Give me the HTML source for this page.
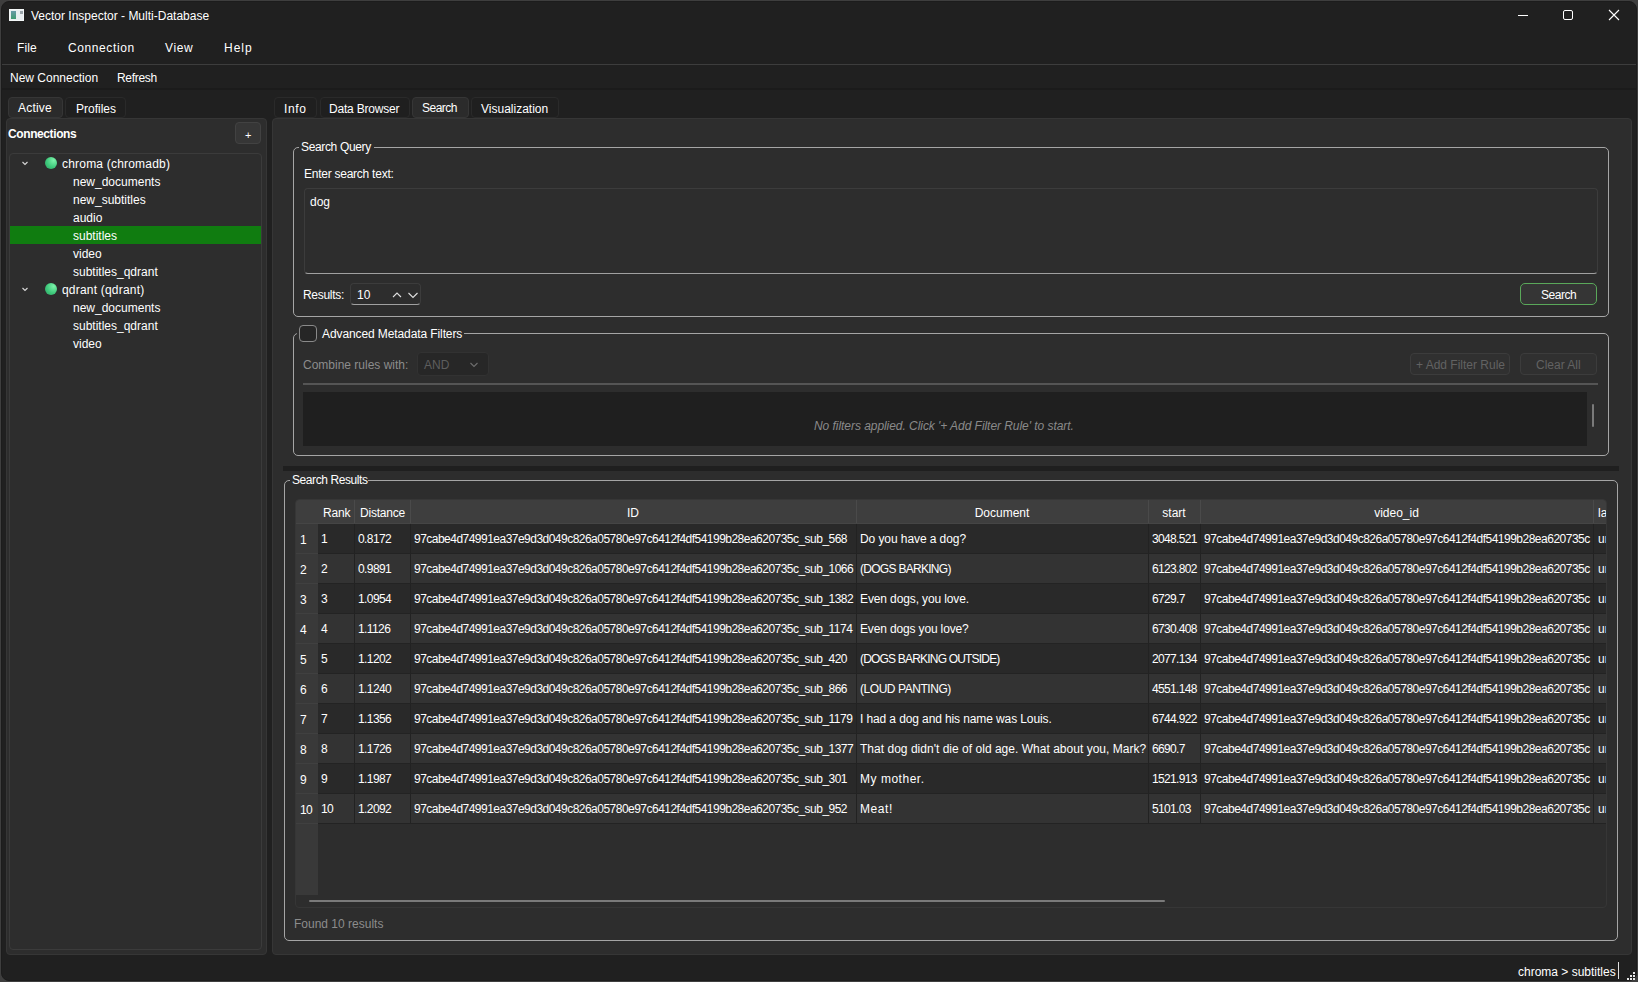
<!DOCTYPE html>
<html><head><meta charset="utf-8">
<style>
*{box-sizing:border-box;margin:0;padding:0}
html,body{width:1638px;height:982px;overflow:hidden;background:#3e3e3e;font-family:"Liberation Sans",sans-serif;font-size:12px;color:#fff}
.a{position:absolute}
.t{position:absolute;white-space:nowrap;line-height:14px;font-size:12px;color:#fff}
.g{color:#8c8c8c}
.hx{letter-spacing:-0.5px}
</style></head><body>
<div class="a" style="left:1px;top:1px;width:1636px;height:980px;background:#202020;border-radius:8px;border:1px solid #1c1c1c"></div>
<div class="a" style="left:9px;top:9px;width:15px;height:12px;background:#e8eef0;border:1px solid #f4f8f8"></div>
<div class="a" style="left:11px;top:11px;width:5px;height:8px;background:linear-gradient(180deg,#6a9aa8,#3e9a70)"></div>
<div class="a" style="left:20px;top:11px;width:3px;height:3px;background:#9aa4aa"></div>
<div class="t" style="left:31px;top:9px;">Vector Inspector - Multi-Database</div>
<div class="a" style="left:1518px;top:15px;width:10px;height:1px;background:#fff"></div>
<div class="a" style="left:1563px;top:10px;width:10px;height:10px;border:1px solid #fff;border-radius:2px"></div>
<svg class="a" style="left:1608px;top:9px" width="12" height="12" viewBox="0 0 12 12"><path d="M1 1L11 11M11 1L1 11" stroke="#fff" stroke-width="1.1"/></svg>
<div class="t" style="left:17px;top:41px;letter-spacing:0.1px">File</div>
<div class="t" style="left:68px;top:41px;letter-spacing:0.6px">Connection</div>
<div class="t" style="left:165px;top:41px;letter-spacing:0.6px">View</div>
<div class="t" style="left:224px;top:41px;letter-spacing:1.0px">Help</div>
<div class="a" style="left:2px;top:64px;width:1634px;height:1px;background:#3d3d3d"></div>
<div class="t" style="left:10px;top:71px;">New Connection</div>
<div class="t" style="left:117px;top:71px;letter-spacing:-0.3px">Refresh</div>
<div class="a" style="left:2px;top:88px;width:1634px;height:2px;background:#1b1b1b"></div>
<div class="a" style="left:8px;top:97px;width:55px;height:21px;background:#2b2b2b;border:1px solid #363636;border-radius:4px"></div>
<div class="a" style="left:65px;top:97px;width:61px;height:21px;background:#1f1f1f;border:1px solid #2a2a2a;border-radius:4px"></div>
<div class="t" style="left:18px;top:101px;letter-spacing:0.2px">Active</div>
<div class="t" style="left:76px;top:102px;">Profiles</div>
<div class="a" style="left:6px;top:118px;width:261px;height:837px;background:#2d2d2d;border:1px solid #363636;border-radius:4px"></div>
<div class="t" style="left:8px;top:127px;font-weight:bold;letter-spacing:-0.4px">Connections</div>
<div class="a" style="left:235px;top:122px;width:26px;height:22px;background:#363636;border:1px solid #424242;border-radius:4px"></div>
<div class="t" style="left:245px;top:128px;font-size:11px">+</div>
<div class="a" style="left:9px;top:153px;width:253px;height:797px;background:#2d2d2d;border:1px solid #3b3b3b;border-radius:4px"></div>
<div class="a" style="left:10px;top:226px;width:251px;height:18px;background:#107c10"></div>
<svg class="a" style="left:21px;top:161px" width="8" height="5" viewBox="0 0 8 5"><path d="M1.5 1L4 3.5L6.5 1" stroke="#d8d8d8" stroke-width="1.1" fill="none"/></svg>
<div class="a" style="left:45px;top:157px;width:12px;height:12px;border-radius:50%;background:radial-gradient(circle at 72% 28%,#7cf2aa,#3fca7c 55%,#2c9f62)"></div>
<div class="t" style="left:62px;top:157px;letter-spacing:0.2px">chroma (chromadb)</div>
<div class="t" style="left:73px;top:175px;">new_documents</div>
<div class="t" style="left:73px;top:193px;">new_subtitles</div>
<div class="t" style="left:73px;top:211px;">audio</div>
<div class="t" style="left:73px;top:229px;">subtitles</div>
<div class="t" style="left:73px;top:247px;">video</div>
<div class="t" style="left:73px;top:265px;">subtitles_qdrant</div>
<svg class="a" style="left:21px;top:287px" width="8" height="5" viewBox="0 0 8 5"><path d="M1.5 1L4 3.5L6.5 1" stroke="#d8d8d8" stroke-width="1.1" fill="none"/></svg>
<div class="a" style="left:45px;top:283px;width:12px;height:12px;border-radius:50%;background:radial-gradient(circle at 72% 28%,#7cf2aa,#3fca7c 55%,#2c9f62)"></div>
<div class="t" style="left:62px;top:283px;letter-spacing:0.2px">qdrant (qdrant)</div>
<div class="t" style="left:73px;top:301px;">new_documents</div>
<div class="t" style="left:73px;top:319px;">subtitles_qdrant</div>
<div class="t" style="left:73px;top:337px;">video</div>
<div class="a" style="left:274px;top:97px;width:43px;height:21px;background:#1f1f1f;border:1px solid #2a2a2a;border-radius:4px"></div>
<div class="t" style="left:284px;top:102px;letter-spacing:0.6px">Info</div>
<div class="a" style="left:320px;top:97px;width:90px;height:21px;background:#1f1f1f;border:1px solid #2a2a2a;border-radius:4px"></div>
<div class="t" style="left:329px;top:102px;letter-spacing:-0.2px">Data Browser</div>
<div class="a" style="left:412px;top:97px;width:57px;height:21px;background:#2b2b2b;border:1px solid #363636;border-radius:4px"></div>
<div class="t" style="left:422px;top:101px;letter-spacing:-0.5px">Search</div>
<div class="a" style="left:471px;top:97px;width:88px;height:21px;background:#1f1f1f;border:1px solid #2a2a2a;border-radius:4px"></div>
<div class="t" style="left:481px;top:102px;letter-spacing:0px">Visualization</div>
<div class="a" style="left:272px;top:118px;width:1360px;height:837px;background:#2d2d2d;border:1px solid #363636;border-radius:4px"></div>
<div class="a" style="left:293px;top:147px;width:1316px;height:170px;border:1px solid #a5a5a5;border-radius:5px"></div>
<div class="a" style="left:299px;top:144px;width:75px;height:6px;background:#2d2d2d"></div>
<div class="t" style="left:301px;top:140px;letter-spacing:-0.35px">Search Query</div>
<div class="t" style="left:304px;top:167px;letter-spacing:-0.25px">Enter search text:</div>
<div class="a" style="left:304px;top:188px;width:1294px;height:86px;background:#2d2d2d;border:1px solid #3c3c3c;border-bottom:1px solid #a0a0a0;border-radius:4px"></div>
<div class="t" style="left:310px;top:195px;">dog</div>
<div class="t" style="left:303px;top:288px;letter-spacing:-0.3px">Results:</div>
<div class="a" style="left:350px;top:283px;width:71px;height:22px;background:#2d2d2d;border:1px solid #3c3c3c;border-bottom:1px solid #a0a0a0;border-radius:4px"></div>
<div class="t" style="left:357px;top:288px;">10</div>
<svg class="a" style="left:392px;top:291px" width="28" height="8" viewBox="0 0 28 8"><path d="M1 6L5 2L9 6M16.5 2L21 6.5L25.5 2" stroke="#e0e0e0" stroke-width="1.1" fill="none"/></svg>
<div class="a" style="left:1520px;top:283px;width:77px;height:22px;background:#353535;border:1px solid #5aa85a;border-radius:5px"></div>
<div class="t" style="left:1541px;top:288px;letter-spacing:-0.48px">Search</div>
<div class="a" style="left:293px;top:333px;width:1316px;height:123px;border:1px solid #a5a5a5;border-radius:5px"></div>
<div class="a" style="left:297px;top:325px;width:167px;height:16px;background:#2d2d2d"></div>
<div class="a" style="left:299px;top:325px;width:18px;height:17px;background:#262626;border:1px solid #8a8a8a;border-radius:4px"></div>
<div class="t" style="left:322px;top:327px;letter-spacing:-0.1px">Advanced Metadata Filters</div>
<div class="t" style="left:303px;top:358px;color:#8c8c8c">Combine rules with:</div>
<div class="a" style="left:417px;top:352px;width:72px;height:24px;background:#272727;border:1px solid #323232;border-radius:4px"></div>
<div class="t" style="left:424px;top:358px;color:#5e5e5e">AND</div>
<svg class="a" style="left:469px;top:362px" width="10" height="6" viewBox="0 0 10 6"><path d="M1.5 1L5 4.5L8.5 1" stroke="#6e6e6e" stroke-width="1.1" fill="none"/></svg>
<div class="a" style="left:1410px;top:353px;width:100px;height:22px;background:#303030;border:1px solid #3c3c3c;border-radius:4px"></div>
<div class="t" style="left:1416px;top:358px;color:#626262">+ Add Filter Rule</div>
<div class="a" style="left:1520px;top:353px;width:77px;height:22px;background:#303030;border:1px solid #3c3c3c;border-radius:4px"></div>
<div class="t" style="left:1536px;top:358px;color:#626262">Clear All</div>
<div class="a" style="left:303px;top:383px;width:1295px;height:2px;background:#555"></div>
<div class="a" style="left:303px;top:392px;width:1284px;height:54px;background:#1f1f1f"></div>
<div class="a" style="left:1592px;top:404px;width:2px;height:23px;background:#7a7a7a;border-radius:1px"></div>
<div class="t" style="left:814px;top:419px;font-style:italic;color:#8a8a8a;letter-spacing:-0.05px">No filters applied. Click '+ Add Filter Rule' to start.</div>
<div class="a" style="left:283px;top:466px;width:1336px;height:5px;background:#1f1f1f"></div>
<div class="a" style="left:284px;top:480px;width:1334px;height:461px;border:1px solid #a5a5a5;border-radius:5px"></div>
<div class="a" style="left:290px;top:476px;width:78px;height:8px;background:#2d2d2d"></div>
<div class="t" style="left:292px;top:473px;letter-spacing:-0.42px">Search Results</div>
<div class="a" style="left:295px;top:499px;width:1312px;height:409px;background:#2d2d2d;border:1px solid #363636;border-radius:4px;overflow:hidden"></div>
<div class="a" style="left:296px;top:500px;width:1310px;height:24px;background:#3e3e3e;border-radius:3px 3px 0 0"></div>
<div class="a" style="left:296px;top:524px;width:22px;height:371px;background:#393939"></div>
<div class="a" style="left:296px;top:523px;width:1310px;height:1px;background:#454545"></div>
<div class="a" style="left:318px;top:524px;width:1288px;height:30px;background:#292929"></div>
<div class="a" style="left:296px;top:553px;width:22px;height:1px;background:#404040"></div>
<div class="a" style="left:318px;top:554px;width:1288px;height:30px;background:#333333"></div>
<div class="a" style="left:296px;top:583px;width:22px;height:1px;background:#404040"></div>
<div class="a" style="left:318px;top:584px;width:1288px;height:30px;background:#292929"></div>
<div class="a" style="left:296px;top:613px;width:22px;height:1px;background:#404040"></div>
<div class="a" style="left:318px;top:614px;width:1288px;height:30px;background:#333333"></div>
<div class="a" style="left:296px;top:643px;width:22px;height:1px;background:#404040"></div>
<div class="a" style="left:318px;top:644px;width:1288px;height:30px;background:#292929"></div>
<div class="a" style="left:296px;top:673px;width:22px;height:1px;background:#404040"></div>
<div class="a" style="left:318px;top:674px;width:1288px;height:30px;background:#333333"></div>
<div class="a" style="left:296px;top:703px;width:22px;height:1px;background:#404040"></div>
<div class="a" style="left:318px;top:704px;width:1288px;height:30px;background:#292929"></div>
<div class="a" style="left:296px;top:733px;width:22px;height:1px;background:#404040"></div>
<div class="a" style="left:318px;top:734px;width:1288px;height:30px;background:#333333"></div>
<div class="a" style="left:296px;top:763px;width:22px;height:1px;background:#404040"></div>
<div class="a" style="left:318px;top:764px;width:1288px;height:30px;background:#292929"></div>
<div class="a" style="left:296px;top:793px;width:22px;height:1px;background:#404040"></div>
<div class="a" style="left:318px;top:794px;width:1288px;height:30px;background:#333333"></div>
<div class="a" style="left:296px;top:823px;width:22px;height:1px;background:#404040"></div>
<div class="a" style="left:354px;top:500px;width:1px;height:23px;background:#4a4a4a"></div>
<div class="a" style="left:354px;top:524px;width:1px;height:300px;background:#222"></div>
<div class="a" style="left:410px;top:500px;width:1px;height:23px;background:#4a4a4a"></div>
<div class="a" style="left:410px;top:524px;width:1px;height:300px;background:#222"></div>
<div class="a" style="left:856px;top:500px;width:1px;height:23px;background:#4a4a4a"></div>
<div class="a" style="left:856px;top:524px;width:1px;height:300px;background:#222"></div>
<div class="a" style="left:1148px;top:500px;width:1px;height:23px;background:#4a4a4a"></div>
<div class="a" style="left:1148px;top:524px;width:1px;height:300px;background:#222"></div>
<div class="a" style="left:1200px;top:500px;width:1px;height:23px;background:#4a4a4a"></div>
<div class="a" style="left:1200px;top:524px;width:1px;height:300px;background:#222"></div>
<div class="a" style="left:1593px;top:500px;width:1px;height:23px;background:#4a4a4a"></div>
<div class="a" style="left:1593px;top:524px;width:1px;height:300px;background:#222"></div>
<div class="a" style="left:318px;top:553px;width:1288px;height:1px;background:#232323"></div>
<div class="a" style="left:318px;top:583px;width:1288px;height:1px;background:#232323"></div>
<div class="a" style="left:318px;top:613px;width:1288px;height:1px;background:#232323"></div>
<div class="a" style="left:318px;top:643px;width:1288px;height:1px;background:#232323"></div>
<div class="a" style="left:318px;top:673px;width:1288px;height:1px;background:#232323"></div>
<div class="a" style="left:318px;top:703px;width:1288px;height:1px;background:#232323"></div>
<div class="a" style="left:318px;top:733px;width:1288px;height:1px;background:#232323"></div>
<div class="a" style="left:318px;top:763px;width:1288px;height:1px;background:#232323"></div>
<div class="a" style="left:318px;top:793px;width:1288px;height:1px;background:#232323"></div>
<div class="a" style="left:318px;top:823px;width:1288px;height:1px;background:#232323"></div>
<div class="t" style="left:323px;top:506px;letter-spacing:-0.2px">Rank</div>
<div class="t" style="left:360px;top:506px;letter-spacing:-0.2px">Distance</div>
<div class="t" style="left:410px;top:506px;width:446px;text-align:center">ID</div>
<div class="t" style="left:856px;top:506px;width:292px;text-align:center">Document</div>
<div class="t" style="left:1148px;top:506px;width:52px;text-align:center">start</div>
<div class="t" style="left:1200px;top:506px;width:393px;text-align:center">video_id</div>
<div class="t" style="left:1598px;top:506px;width:8px;overflow:hidden">la</div>
<div class="t" style="left:300px;top:533px;letter-spacing:-0.6px">1</div>
<div class="t" style="left:321px;top:532px;letter-spacing:-0.6px">1</div>
<div class="t" style="left:358px;top:532px;letter-spacing:-0.6px">0.8172</div>
<div class="t" style="left:414px;top:532px;letter-spacing:-0.52px">97cabe4d74991ea37e9d3d049c826a05780e97c6412f4df54199b28ea620735c_sub_568</div>
<div class="t" style="left:860px;top:532px;letter-spacing:-0.08px">Do you have a dog?</div>
<div class="t" style="left:1152px;top:532px;letter-spacing:-0.65px">3048.521</div>
<div class="t" style="left:1204px;top:532px;width:389px;overflow:hidden;letter-spacing:-0.5px">97cabe4d74991ea37e9d3d049c826a05780e97c6412f4df54199b28ea620735c</div>
<div class="t" style="left:1598px;top:532px;width:8px;overflow:hidden">unknown</div>
<div class="t" style="left:300px;top:563px;letter-spacing:-0.6px">2</div>
<div class="t" style="left:321px;top:562px;letter-spacing:-0.6px">2</div>
<div class="t" style="left:358px;top:562px;letter-spacing:-0.6px">0.9891</div>
<div class="t" style="left:414px;top:562px;letter-spacing:-0.52px">97cabe4d74991ea37e9d3d049c826a05780e97c6412f4df54199b28ea620735c_sub_1066</div>
<div class="t" style="left:860px;top:562px;letter-spacing:-0.71px">(DOGS BARKING)</div>
<div class="t" style="left:1152px;top:562px;letter-spacing:-0.65px">6123.802</div>
<div class="t" style="left:1204px;top:562px;width:389px;overflow:hidden;letter-spacing:-0.5px">97cabe4d74991ea37e9d3d049c826a05780e97c6412f4df54199b28ea620735c</div>
<div class="t" style="left:1598px;top:562px;width:8px;overflow:hidden">unknown</div>
<div class="t" style="left:300px;top:593px;letter-spacing:-0.6px">3</div>
<div class="t" style="left:321px;top:592px;letter-spacing:-0.6px">3</div>
<div class="t" style="left:358px;top:592px;letter-spacing:-0.6px">1.0954</div>
<div class="t" style="left:414px;top:592px;letter-spacing:-0.52px">97cabe4d74991ea37e9d3d049c826a05780e97c6412f4df54199b28ea620735c_sub_1382</div>
<div class="t" style="left:860px;top:592px;letter-spacing:-0.12px">Even dogs, you love.</div>
<div class="t" style="left:1152px;top:592px;letter-spacing:-0.65px">6729.7</div>
<div class="t" style="left:1204px;top:592px;width:389px;overflow:hidden;letter-spacing:-0.5px">97cabe4d74991ea37e9d3d049c826a05780e97c6412f4df54199b28ea620735c</div>
<div class="t" style="left:1598px;top:592px;width:8px;overflow:hidden">unknown</div>
<div class="t" style="left:300px;top:623px;letter-spacing:-0.6px">4</div>
<div class="t" style="left:321px;top:622px;letter-spacing:-0.6px">4</div>
<div class="t" style="left:358px;top:622px;letter-spacing:-0.6px">1.1126</div>
<div class="t" style="left:414px;top:622px;letter-spacing:-0.52px">97cabe4d74991ea37e9d3d049c826a05780e97c6412f4df54199b28ea620735c_sub_1174</div>
<div class="t" style="left:860px;top:622px;letter-spacing:-0.15px">Even dogs you love?</div>
<div class="t" style="left:1152px;top:622px;letter-spacing:-0.65px">6730.408</div>
<div class="t" style="left:1204px;top:622px;width:389px;overflow:hidden;letter-spacing:-0.5px">97cabe4d74991ea37e9d3d049c826a05780e97c6412f4df54199b28ea620735c</div>
<div class="t" style="left:1598px;top:622px;width:8px;overflow:hidden">unknown</div>
<div class="t" style="left:300px;top:653px;letter-spacing:-0.6px">5</div>
<div class="t" style="left:321px;top:652px;letter-spacing:-0.6px">5</div>
<div class="t" style="left:358px;top:652px;letter-spacing:-0.6px">1.1202</div>
<div class="t" style="left:414px;top:652px;letter-spacing:-0.52px">97cabe4d74991ea37e9d3d049c826a05780e97c6412f4df54199b28ea620735c_sub_420</div>
<div class="t" style="left:860px;top:652px;letter-spacing:-0.81px">(DOGS BARKING OUTSIDE)</div>
<div class="t" style="left:1152px;top:652px;letter-spacing:-0.65px">2077.134</div>
<div class="t" style="left:1204px;top:652px;width:389px;overflow:hidden;letter-spacing:-0.5px">97cabe4d74991ea37e9d3d049c826a05780e97c6412f4df54199b28ea620735c</div>
<div class="t" style="left:1598px;top:652px;width:8px;overflow:hidden">unknown</div>
<div class="t" style="left:300px;top:683px;letter-spacing:-0.6px">6</div>
<div class="t" style="left:321px;top:682px;letter-spacing:-0.6px">6</div>
<div class="t" style="left:358px;top:682px;letter-spacing:-0.6px">1.1240</div>
<div class="t" style="left:414px;top:682px;letter-spacing:-0.52px">97cabe4d74991ea37e9d3d049c826a05780e97c6412f4df54199b28ea620735c_sub_866</div>
<div class="t" style="left:860px;top:682px;letter-spacing:-0.45px">(LOUD PANTING)</div>
<div class="t" style="left:1152px;top:682px;letter-spacing:-0.65px">4551.148</div>
<div class="t" style="left:1204px;top:682px;width:389px;overflow:hidden;letter-spacing:-0.5px">97cabe4d74991ea37e9d3d049c826a05780e97c6412f4df54199b28ea620735c</div>
<div class="t" style="left:1598px;top:682px;width:8px;overflow:hidden">unknown</div>
<div class="t" style="left:300px;top:713px;letter-spacing:-0.6px">7</div>
<div class="t" style="left:321px;top:712px;letter-spacing:-0.6px">7</div>
<div class="t" style="left:358px;top:712px;letter-spacing:-0.6px">1.1356</div>
<div class="t" style="left:414px;top:712px;letter-spacing:-0.52px">97cabe4d74991ea37e9d3d049c826a05780e97c6412f4df54199b28ea620735c_sub_1179</div>
<div class="t" style="left:860px;top:712px;letter-spacing:-0.11px">I had a dog and his name was Louis.</div>
<div class="t" style="left:1152px;top:712px;letter-spacing:-0.65px">6744.922</div>
<div class="t" style="left:1204px;top:712px;width:389px;overflow:hidden;letter-spacing:-0.5px">97cabe4d74991ea37e9d3d049c826a05780e97c6412f4df54199b28ea620735c</div>
<div class="t" style="left:1598px;top:712px;width:8px;overflow:hidden">unknown</div>
<div class="t" style="left:300px;top:743px;letter-spacing:-0.6px">8</div>
<div class="t" style="left:321px;top:742px;letter-spacing:-0.6px">8</div>
<div class="t" style="left:358px;top:742px;letter-spacing:-0.6px">1.1726</div>
<div class="t" style="left:414px;top:742px;letter-spacing:-0.52px">97cabe4d74991ea37e9d3d049c826a05780e97c6412f4df54199b28ea620735c_sub_1377</div>
<div class="t" style="left:860px;top:742px;letter-spacing:0.02px">That dog didn't die of old age. What about you, Mark?</div>
<div class="t" style="left:1152px;top:742px;letter-spacing:-0.65px">6690.7</div>
<div class="t" style="left:1204px;top:742px;width:389px;overflow:hidden;letter-spacing:-0.5px">97cabe4d74991ea37e9d3d049c826a05780e97c6412f4df54199b28ea620735c</div>
<div class="t" style="left:1598px;top:742px;width:8px;overflow:hidden">unknown</div>
<div class="t" style="left:300px;top:773px;letter-spacing:-0.6px">9</div>
<div class="t" style="left:321px;top:772px;letter-spacing:-0.6px">9</div>
<div class="t" style="left:358px;top:772px;letter-spacing:-0.6px">1.1987</div>
<div class="t" style="left:414px;top:772px;letter-spacing:-0.52px">97cabe4d74991ea37e9d3d049c826a05780e97c6412f4df54199b28ea620735c_sub_301</div>
<div class="t" style="left:860px;top:772px;letter-spacing:0.52px">My mother.</div>
<div class="t" style="left:1152px;top:772px;letter-spacing:-0.65px">1521.913</div>
<div class="t" style="left:1204px;top:772px;width:389px;overflow:hidden;letter-spacing:-0.5px">97cabe4d74991ea37e9d3d049c826a05780e97c6412f4df54199b28ea620735c</div>
<div class="t" style="left:1598px;top:772px;width:8px;overflow:hidden">unknown</div>
<div class="t" style="left:300px;top:803px;letter-spacing:-0.6px">10</div>
<div class="t" style="left:321px;top:802px;letter-spacing:-0.6px">10</div>
<div class="t" style="left:358px;top:802px;letter-spacing:-0.6px">1.2092</div>
<div class="t" style="left:414px;top:802px;letter-spacing:-0.52px">97cabe4d74991ea37e9d3d049c826a05780e97c6412f4df54199b28ea620735c_sub_952</div>
<div class="t" style="left:860px;top:802px;letter-spacing:0.58px">Meat!</div>
<div class="t" style="left:1152px;top:802px;letter-spacing:-0.65px">5101.03</div>
<div class="t" style="left:1204px;top:802px;width:389px;overflow:hidden;letter-spacing:-0.5px">97cabe4d74991ea37e9d3d049c826a05780e97c6412f4df54199b28ea620735c</div>
<div class="t" style="left:1598px;top:802px;width:8px;overflow:hidden">unknown</div>
<div class="a" style="left:309px;top:900px;width:856px;height:2px;background:#7a7a7a;border-radius:1px"></div>
<div class="t" style="left:294px;top:917px;color:#8c8c8c">Found 10 results</div>
<div class="t" style="left:1518px;top:965px;">chroma &gt; subtitles</div>
<div class="a" style="left:1618px;top:962px;width:1px;height:17px;background:#e0e0e0"></div>
<div class="a" style="left:1633px;top:972px;width:2px;height:2px;background:#e8e8e8"></div>
<div class="a" style="left:1630px;top:975px;width:2px;height:2px;background:#e8e8e8"></div>
<div class="a" style="left:1633px;top:975px;width:2px;height:2px;background:#e8e8e8"></div>
<div class="a" style="left:1627px;top:978px;width:2px;height:2px;background:#e8e8e8"></div>
<div class="a" style="left:1630px;top:978px;width:2px;height:2px;background:#e8e8e8"></div>
<div class="a" style="left:1633px;top:978px;width:2px;height:2px;background:#e8e8e8"></div>
</body></html>
